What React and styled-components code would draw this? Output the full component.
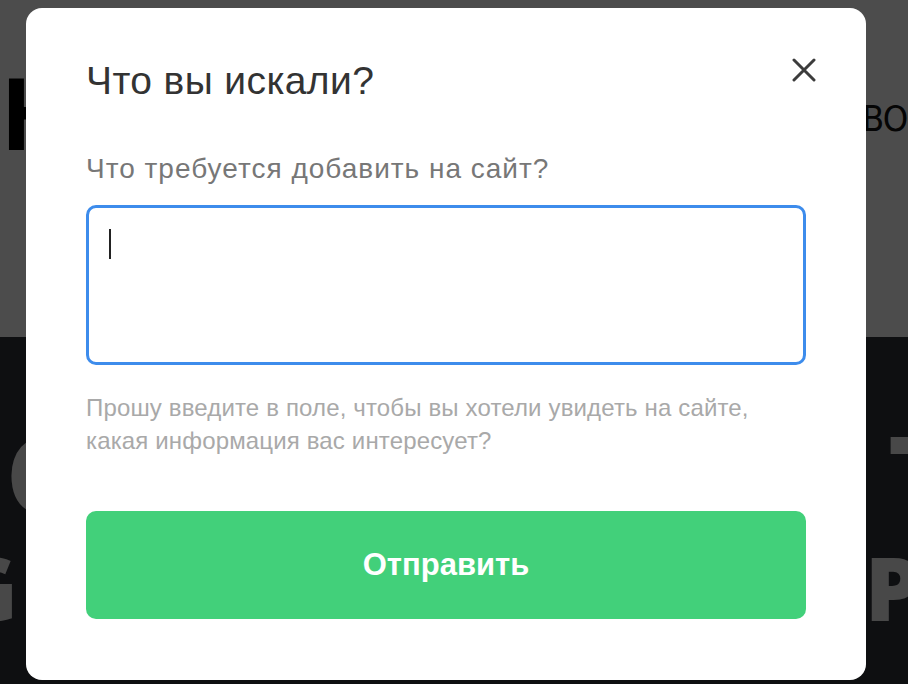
import React from 'react'
import styled, { createGlobalStyle } from 'styled-components'

const GlobalStyle = createGlobalStyle`
  html, body {
    margin: 0;
    padding: 0;
    width: 100%;
    height: 100%;
    overflow: hidden;
  }
  body {
    font-family: 'Liberation Sans', Arial, sans-serif;
  }
  * {
    box-sizing: border-box;
  }
`

const Page = styled.div`
  width: 908px;
  height: 684px;
  display: flex;
  flex-direction: column;
  overflow: hidden;
`

const TopBand = styled.header`
  height: 337px;
  background: #fff;
  display: flex;
  justify-content: space-between;
  align-items: flex-start;
  padding: 52px 0 0 0;
`

const Logo = styled.div`
  font-family: 'Liberation Sans', Arial, sans-serif;
  font-weight: 700;
  font-size: 104px;
  line-height: 1.2;
  color: #000;
  margin-left: 2px;
`

const Clip = styled.div`
  width: ${p => p.$width}px;
  overflow: hidden;
  white-space: nowrap;
  display: flex;
  justify-content: ${p => (p.$end ? 'flex-end' : 'flex-start')};
  padding-left: ${p => p.$pad || 0}px;
`

const Contact = styled.div`
  font-family: 'Liberation Sans Narrow', 'DejaVu Sans Condensed', 'Open Sans', sans-serif;
  font-size: 36px;
  line-height: 1;
  letter-spacing: -1.5px;
  color: #111;
  margin-top: 49px;
`

const DarkBand = styled.section`
  flex: 1;
  background: #2f3239;
  display: flex;
  flex-direction: column;
  padding-top: 76px;
`

const HeroLine = styled.div`
  display: flex;
  justify-content: space-between;
  align-items: center;
  height: ${p => p.$height}px;
`

const HeroWord = styled.span`
  font-family: 'Open Sans', sans-serif;
  font-weight: 800;
  font-size: ${p => p.$size}px;
  line-height: 1;
  color: #f0f0f0;
`

const Overlay = styled.div`
  position: fixed;
  inset: 0;
  background: rgba(0, 0, 0, 0.7);
  display: flex;
  align-items: flex-start;
  padding: 8px 0 0 26px;
`

const Modal = styled.div`
  width: 840px;
  height: 672px;
  background: #fff;
  border-radius: 16px;
  padding: 51px 60px 0 60px;
  display: flex;
  flex-direction: column;
`

const Header = styled.div`
  display: flex;
  justify-content: space-between;
  align-items: flex-start;
`

const Title = styled.h2`
  margin: 0;
  font-size: 39px;
  line-height: 44px;
  letter-spacing: 0.4px;
  font-weight: 400;
  color: #333;
`

const CloseButton = styled.button`
  border: 0;
  background: none;
  padding: 0;
  margin: -1px -10px 0 0;
  width: 24px;
  height: 24px;
  cursor: pointer;
  display: flex;
  color: #3c3c3c;
`

const Label = styled.label`
  display: block;
  margin-top: 49px;
  font-size: 28px;
  line-height: 34px;
  letter-spacing: 1px;
  color: #777;
`

const FieldWrap = styled.div`
  position: relative;
  margin-top: 19px;
`

const Field = styled.textarea`
  display: block;
  width: 100%;
  height: 160px;
  border: 3px solid #3d8cec;
  border-radius: 10px;
  padding: 20px 21px;
  font-family: 'Liberation Sans', Arial, sans-serif;
  font-size: 24px;
  color: #222;
  caret-color: transparent;
  resize: none;
  outline: none;
`

const Caret = styled.span`
  position: absolute;
  left: 23px;
  top: 24px;
  width: 2px;
  height: 30px;
  background: #222;
  pointer-events: none;
`

const Hint = styled.p`
  margin: 26px 0 0 0;
  font-size: 24px;
  line-height: 33px;
  letter-spacing: 0.15px;
  color: #a9a9a9;
`

const Submit = styled.button`
  margin-top: 54px;
  width: 100%;
  height: 108px;
  border: 0;
  border-radius: 10px;
  background: #42d07a;
  color: #fff;
  font-family: 'Liberation Sans', Arial, sans-serif;
  font-weight: 700;
  font-size: 31px;
  cursor: pointer;
`

const CloseIcon = () => (
  <svg width="24" height="24" viewBox="0 0 24 24" fill="none">
    <path
      d="M2 2L22 22M22 2L2 22"
      stroke="currentColor"
      strokeWidth="3"
      strokeLinecap="round"
    />
  </svg>
)

export default function App() {
  return (
    <>
      <GlobalStyle />
      <Page>
        <TopBand>
          <Logo>Н</Logo>
          <Clip $width={46}>
            <Contact>ВОСТОК</Contact>
          </Clip>
        </TopBand>
        <DarkBand>
          <HeroLine $height={120}>
            <Clip $width={26} $pad={6}>
              <HeroWord $size={108}>С</HeroWord>
            </Clip>
            <Clip $width={20}>
              <HeroWord $size={108}>Т</HeroWord>
            </Clip>
          </HeroLine>
          <HeroLine $height={108}>
            <Clip $width={18} $end>
              <HeroWord $size={88}>G</HeroWord>
            </Clip>
            <Clip $width={43}>
              <HeroWord $size={88}>Р</HeroWord>
            </Clip>
          </HeroLine>
        </DarkBand>
      </Page>
      <Overlay>
        <Modal>
          <Header>
            <Title>Что вы искали?</Title>
            <CloseButton aria-label="Закрыть">
              <CloseIcon />
            </CloseButton>
          </Header>
          <Label htmlFor="wish">Что требуется добавить на сайт?</Label>
          <FieldWrap>
            <Field id="wish" autoFocus />
            <Caret />
          </FieldWrap>
          <Hint>
            Прошу введите в поле, чтобы вы хотели увидеть на сайте,
            <br />
            какая информация вас интересует?
          </Hint>
          <Submit>Отправить</Submit>
        </Modal>
      </Overlay>
    </>
  )
}
